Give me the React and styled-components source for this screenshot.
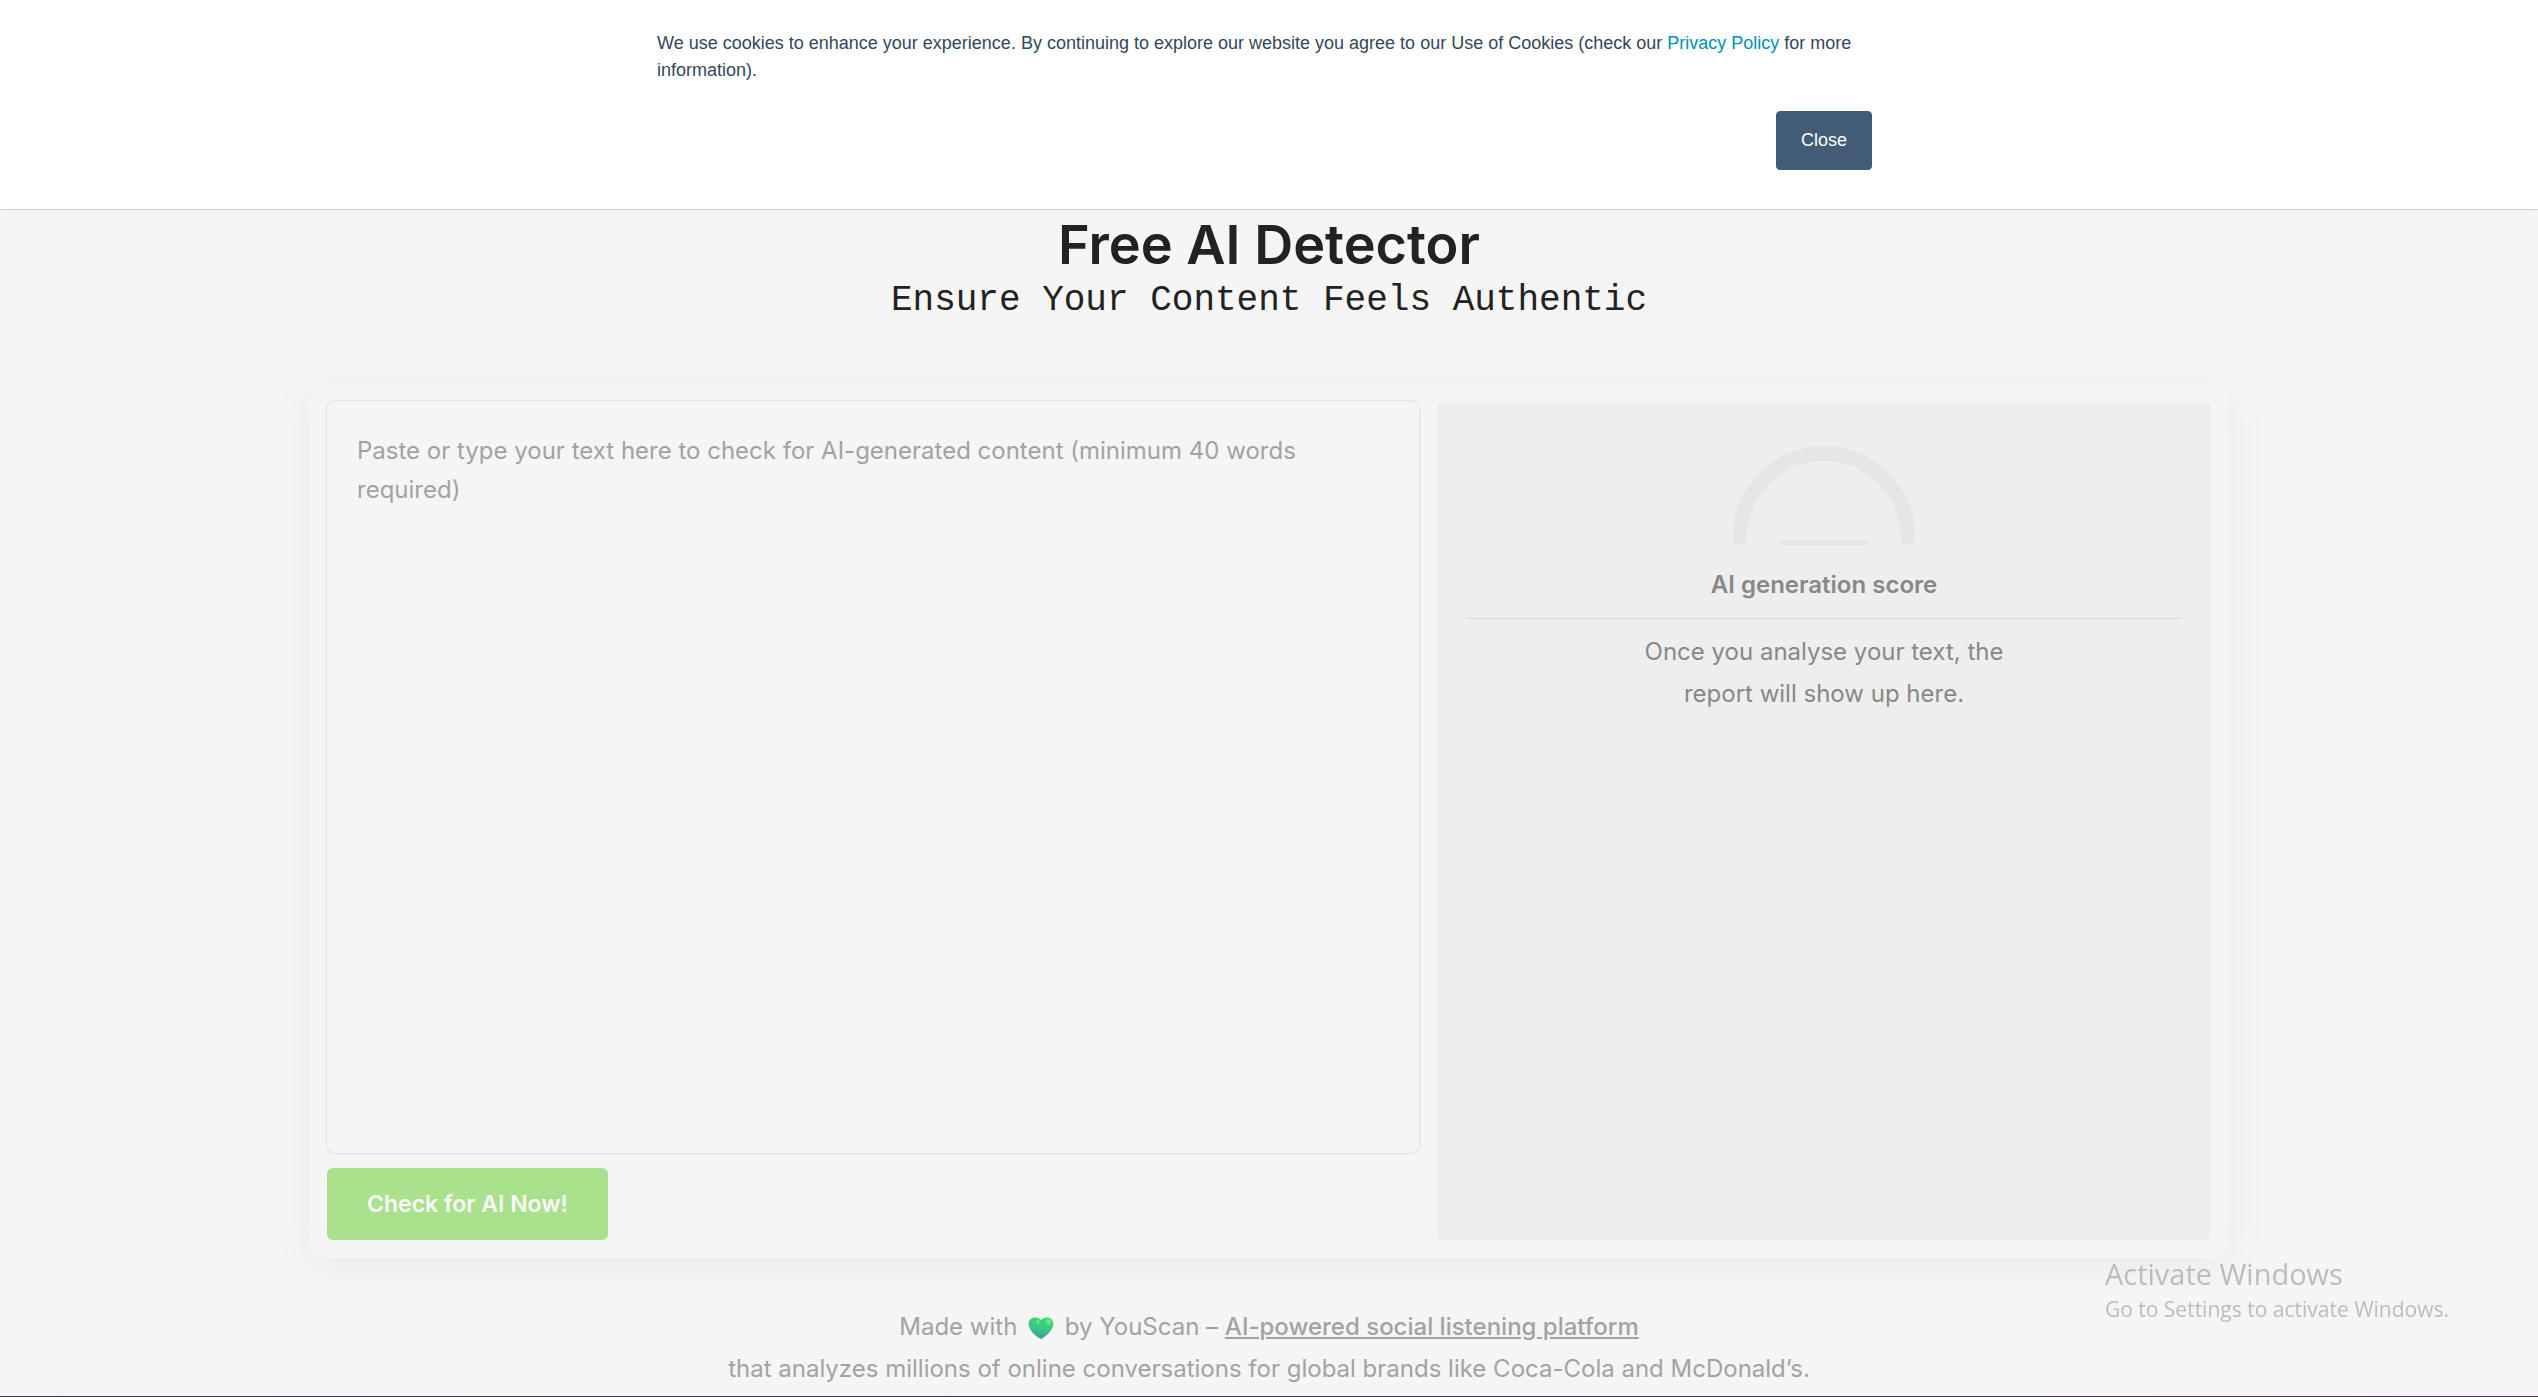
import React from "react";
import styled, { createGlobalStyle } from "styled-components";

const GlobalStyle = createGlobalStyle`
  *, *::before, *::after { box-sizing: border-box; }
  body {
    margin: 0;
    background: #f5f5f5;
    font-family: Inter, "Noto Sans", sans-serif;
    font-size: 24px;
    line-height: 42px;
    color: #a2a2a2;
  }
`;

const Page = styled.div`
  display: flex;
  flex-direction: column;
  min-height: 100vh;
`;

const CookieBanner = styled.section`
  background: #fff;
  border-bottom: 1px solid #cbd6e2;
  box-shadow: 0 1px 8px #eaf0f6;
  padding: 30px 24px 39px;
  font: 18px/27px "Liberation Sans", Arial, sans-serif;
  color: #33475b;
`;

const CookieInner = styled.div`
  display: flex;
  flex-direction: column;
  gap: 27px;
  max-width: 1224px;
  margin: 0 auto;
`;

const CookieText = styled.p`
  margin: 0;
`;

const PolicyLink = styled.a`
  color: #0091ae;
  text-decoration: none;
`;

const CloseButton = styled.button`
  align-self: flex-end;
  margin-right: 9px;
  padding: 16px 24px;
  border: 1px solid #425b76;
  border-radius: 4px;
  background: #425b76;
  color: #fff;
  font: inherit;
  line-height: 25px;
`;

const Main = styled.main`
  display: flex;
  flex-direction: column;
  align-items: center;
  padding: 0 24px;
`;

const Title = styled.h1`
  margin: 0;
  font-size: 54px;
  line-height: 70px;
  font-weight: 600;
  color: #222;
`;

const Subtitle = styled.p`
  margin: 0 0 61px;
  font: 36px/42px "Liberation Mono", monospace;
  color: #222;
`;

const Card = styled.form`
  display: grid;
  grid-template-columns: minmax(0, 1fr) 774px;
  gap: 18px;
  width: 100%;
  max-width: 1920px;
  padding: 18px;
  border-radius: 18px;
  box-shadow: 0 6px 45px rgba(0, 0, 0, 0.05);
  background: #f5f5f5;
`;

const Editor = styled.div`
  display: flex;
  flex-direction: column;
  align-items: flex-start;
  gap: 15px;
`;

const TextBox = styled.textarea`
  display: block;
  width: 100%;
  height: 752px;
  padding: 30px;
  border: 0;
  border-radius: 9px;
  box-shadow: 0 0 0 1px #e5e5e5, 0 0 0 2px #f0f0f0;
  background: transparent;
  color: #222;
  font: inherit;
  line-height: 39px;
  resize: none;
  outline: none;
  &::placeholder {
    color: #a2a2a2;
    opacity: 1;
  }
`;

const CheckButton = styled.button`
  padding: 15px 40px;
  border: 0;
  border-radius: 6px;
  background: #aae18c;
  color: #fafafa;
  font: inherit;
  font-size: 23px;
  font-weight: 600;
`;

const Report = styled.section`
  display: flex;
  flex-direction: column;
  align-items: center;
  padding: 45px 30px;
  border-radius: 6px;
  background: #eee;
  color: #888;
  text-align: center;
`;

const ReportTitle = styled.h2`
  align-self: stretch;
  margin: 18px 0 0;
  padding-bottom: 12px;
  border-bottom: 1px solid #d7d7d7;
  font-size: 24px;
  line-height: 42px;
  font-weight: 600;
`;

const ReportText = styled.p`
  max-width: 400px;
  margin: 12px 0 0;
`;

const Footer = styled.footer`
  margin-top: auto;
  padding: 0 24px 6px;
  text-align: center;
`;

const FooterText = styled.p`
  margin: 0;
`;

const FooterLink = styled.a`
  color: inherit;
  font-weight: 500;
  text-decoration: underline;
`;

const HeartIcon = styled.svg`
  margin: 0 4px;
  vertical-align: -4px;
`;

const PageEdge = styled.div`
  height: 1px;
  background: linear-gradient(90deg, #3f3f4a, #3d3c5e 50%, #4d3b50);
`;

const Watermark = styled.aside`
  position: fixed;
  right: 89px;
  bottom: 73px;
  font: 21px/30px "Open Sans", "Noto Sans", sans-serif;
  color: #bcbcbc;
  pointer-events: none;
`;

const WatermarkTitle = styled.div`
  font-size: 29px;
  line-height: 40px;
`;

function Gauge() {
  return (
    <svg width="184" height="100" viewBox="0 0 184 100" fill="none" aria-hidden="true">
      <path d="M8 91.500a84 84 0 0 1 168 0" stroke="#e6e6e6" strokeWidth="15" strokeLinecap="round" />
      <path d="M49.500 94h86v5h-86z" fill="#e6e6e6" />
    </svg>
  );
}

function Heart() {
  return (
    <HeartIcon width="26" height="22" viewBox="0 0 26 22" role="img" aria-label="green heart">
      <defs>
        <linearGradient id="heartFill" x1="0.6" y1="0" x2="0.35" y2="1">
          <stop offset="0" stopColor="#3fd673" />
          <stop offset="0.5" stopColor="#3ac87f" />
          <stop offset="1" stopColor="#3a9da0" />
        </linearGradient>
        <radialGradient id="heartShine">
          <stop offset="0" stopColor="#7df29a" />
          <stop offset="1" stopColor="#7df29a" stopOpacity="0" />
        </radialGradient>
      </defs>
      <path
        d="M13 3.200C15 .6 18 0 20.500.6 24 1.400 25.800 4.500 25.200 8.300 24.300 14 17.500 20 14.200 21.400q-1.200.6-2.400 0C8.500 20 1.700 14 .8 8.300.2 4.500 2 1.400 5.500.8 8 .3 11 .8 13 3.200z"
        fill="url(#heartFill)"
      />
      <ellipse cx="20.500" cy="5" rx="4" ry="4" fill="url(#heartShine)" />
      <ellipse cx="10" cy="5" rx="2" ry="3.500" fill="url(#heartShine)" />
    </HeartIcon>
  );
}

export default function App() {
  return (
    <>
      <GlobalStyle />
      <Page>
        <CookieBanner aria-label="Cookie notice">
          <CookieInner>
            <CookieText>
              We use cookies to enhance your experience. By continuing to explore our website you
              agree to our Use of Cookies (check our <PolicyLink href="#privacy">Privacy Policy</PolicyLink>{" "}
              for more information).
            </CookieText>
            <CloseButton type="button">Close</CloseButton>
          </CookieInner>
        </CookieBanner>

        <Main>
          <Title>Free AI Detector</Title>
          <Subtitle>Ensure Your Content Feels Authentic</Subtitle>
          <Card onSubmit={(e) => e.preventDefault()}>
            <Editor>
              <TextBox
                aria-label="Text to check"
                placeholder="Paste or type your text here to check for AI-generated content (minimum 40 words required)"
              />
              <CheckButton type="submit">Check for AI Now!</CheckButton>
            </Editor>
            <Report>
              <Gauge />
              <ReportTitle>AI generation score</ReportTitle>
              <ReportText>Once you analyse your text, the report will show up here.</ReportText>
            </Report>
          </Card>
        </Main>

        <Footer>
          <FooterText>
            Made with <Heart /> by YouScan –{" "}
            <FooterLink href="#youscan">AI-powered social listening platform</FooterLink>
            <br />
            that analyzes millions of online conversations for global brands like Coca-Cola and
            McDonald’s.
          </FooterText>
        </Footer>
        <PageEdge />
      </Page>
      <Watermark>
        <WatermarkTitle>Activate Windows</WatermarkTitle>
        Go to Settings to activate Windows.
      </Watermark>
    </>
  );
}
